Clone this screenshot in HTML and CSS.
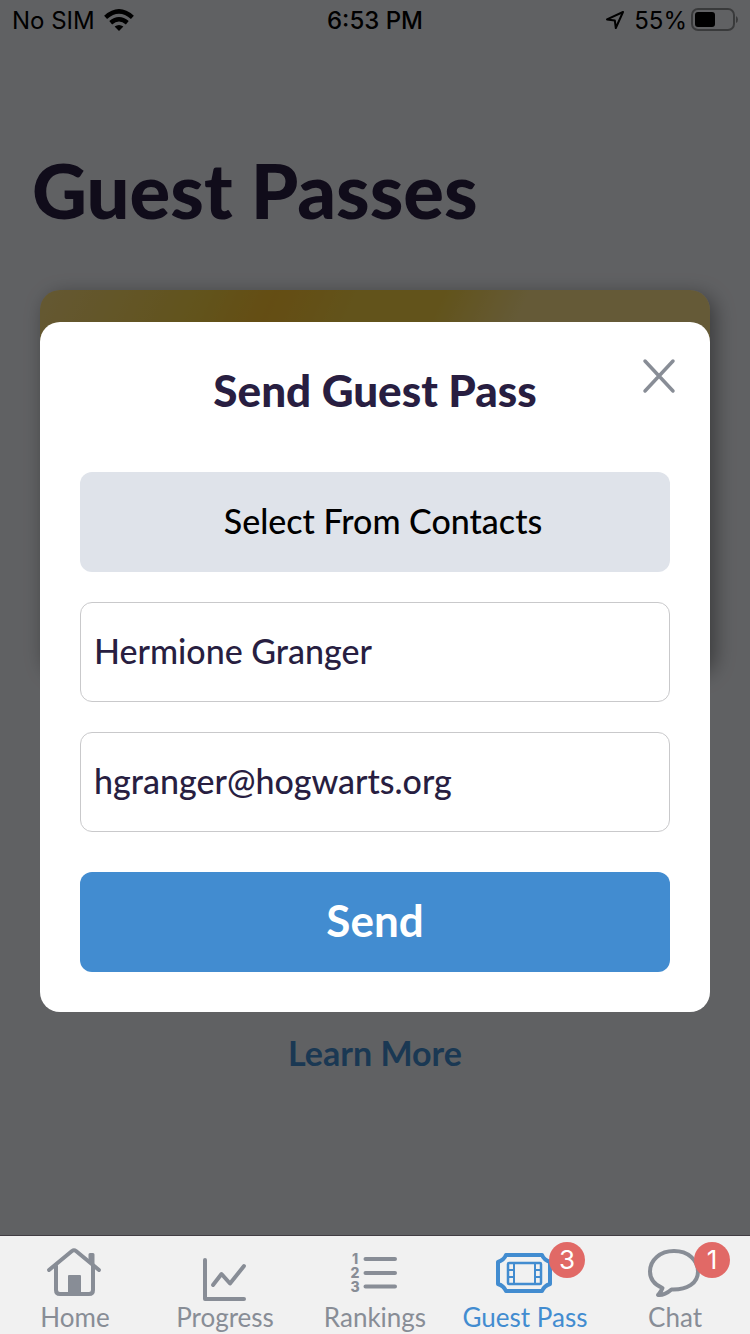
FILE: index.html
```html
<!DOCTYPE html>
<html lang="en">
<head>
<meta charset="utf-8">
<meta name="viewport" content="width=device-width, initial-scale=1">
<title>Guest Passes</title>
<link rel="stylesheet" href="styles.css">
</head>
<body>
<div class="app">
  <header class="status-bar">
    <div class="status-left">
      <span>No SIM</span>
      <svg class="wifi" viewBox="0 0 30 22" width="30" height="22" aria-hidden="true">
        <path d="M15 22 L10.6 17.6 Q15 14.2 19.4 17.6 Z" fill="currentColor"/>
        <path d="M6.7 13.8 Q15 6.8 23.3 13.8" fill="none" stroke="currentColor" stroke-width="4.4"/>
        <path d="M1.6 8.4 Q15 -3.6 28.4 8.4" fill="none" stroke="currentColor" stroke-width="4.4"/>
      </svg>
    </div>
    <time class="status-time">6:53 PM</time>
    <div class="status-right">
      <svg viewBox="0 0 20 20" width="20" height="20" aria-hidden="true">
        <path d="M18 2 L2 9.4 L9.8 10.4 L10.8 18 Z" fill="none" stroke="currentColor" stroke-width="2" stroke-linejoin="round"/>
      </svg>
      <span class="battery-level">55%</span>
      <svg viewBox="0 0 48 24" width="48" height="24" aria-hidden="true">
        <rect x="2" y="1" width="42" height="21" rx="6" fill="none" stroke="#000" stroke-opacity=".4" stroke-width="2"/>
        <rect x="5" y="4" width="20" height="15" rx="3" fill="#000"/>
        <path d="M46 8 Q48 9 48 11.500 Q48 14 46 15 Z" fill="#000" fill-opacity=".4"/>
      </svg>
    </div>
  </header>

  <main class="page">
    <h1 class="page-title">Guest Passes</h1>
    <section class="pass-card" aria-label="Guest pass"></section>
    <a class="learn-more" href="#">Learn More</a>
  </main>

  <nav class="tab-bar">
    <a class="tab" href="#">
      <svg class="tab-icon" viewBox="0 0 56 52" width="56" height="52" fill="none" stroke="currentColor" stroke-width="4" stroke-linecap="round" stroke-linejoin="round" aria-hidden="true">
        <path d="M2 24 L25 5 Q27 3.500 29 5 L52 24"/>
        <path d="M9 20 V44 Q9 48 13 48 H42 Q46 48 46 44 V20"/>
        <path d="M43 14 V8.500 H46 V19" fill="currentColor" stroke-width="3"/>
        <rect x="22" y="30" width="11" height="17" fill="currentColor" stroke-width="2"/>
      </svg>
      <span>Home</span>
    </a>
    <a class="tab" href="#">
      <svg class="tab-icon" viewBox="0 0 48 52" width="48" height="52" fill="none" stroke="currentColor" stroke-width="4" stroke-linecap="round" stroke-linejoin="round" aria-hidden="true">
        <path d="M4 14 V53 H43"/>
        <path d="M12 39 L20.500 28 L29 37.500 L43 20"/>
      </svg>
      <span>Progress</span>
    </a>
    <a class="tab" href="#">
      <svg class="tab-icon" viewBox="0 0 50 52" width="50" height="52" aria-hidden="true">
        <path d="M15.500 13 H45 M15.500 27 H45 M15.500 40.500 H45" stroke="currentColor" stroke-width="4" stroke-linecap="round"/>
        <g class="rank-digits" fill="currentColor"><text x="5" y="18" text-anchor="middle">1</text><text x="5" y="32" text-anchor="middle">2</text><text x="5" y="46" text-anchor="middle">3</text></g>
      </svg>
      <span>Rankings</span>
    </a>
    <a class="tab tab-active" href="#" aria-current="page">
      <span class="icon-wrap">
        <svg class="tab-icon" viewBox="0 0 56 52" width="56" height="52" fill="none" stroke="currentColor" aria-hidden="true">
          <path d="M9 9 H45 Q47 14 53 16 V38 Q47 40 45 45 H9 Q7 40 1 38 V16 Q7 14 9 9 Z" stroke-width="4" stroke-linejoin="round"/>
          <rect x="11" y="17" width="33" height="21" rx="1" stroke-width="2.500"/>
          <path d="M17 17 V38 M38 17 V38" stroke-width="2"/>
          <path d="M11 24 H17 M11 31 H17 M38 24 H44 M38 31 H44" stroke-width="2"/>
        </svg>
        <span class="badge">3</span>
      </span>
      <span>Guest Pass</span>
    </a>
    <a class="tab" href="#">
      <span class="icon-wrap">
        <svg class="tab-icon" viewBox="0 0 56 52" width="56" height="52" fill="none" stroke="currentColor" stroke-width="4" stroke-linejoin="round" aria-hidden="true">
          <path d="M27 5 C13 5 3 14 3 25.500 C3 33 7 38.500 15.500 42 C14.500 45 12.500 47 11 49 C16 49.500 21 46.500 24.500 43.500 C40 44 51 37.500 51 25.500 C51 14 41 5 27 5 Z"/>
        </svg>
        <span class="badge badge-inset">1</span>
      </span>
      <span>Chat</span>
    </a>
  </nav>
</div>

<div class="scrim">
  <form class="modal" role="dialog" aria-modal="true" aria-labelledby="modal-title">
    <button class="close" type="button" aria-label="Close">
      <svg viewBox="0 0 34 36" width="34" height="36" aria-hidden="true"><path d="M3 3 L31 33 M31 3 L3 33" stroke="currentColor" stroke-width="3.500" stroke-linecap="round"/></svg>
    </button>
    <h2 class="modal-title" id="modal-title">Send Guest Pass</h2>
    <div class="fields">
      <button class="contacts" type="button">Select From Contacts</button>
      <input class="field" type="text" aria-label="Name" value="Hermione Granger">
      <input class="field" type="email" aria-label="Email" value="hgranger@hogwarts.org">
    </div>
    <button class="send" type="submit">Send</button>
  </form>
</div>
</body>
</html>
```

FILE: styles.css
```css
* {
  box-sizing: border-box;
}

body {
  margin: 0;
  background: #f0f2f7;
  color: #281e41;
  font-family: Lato, "Open Sans", sans-serif;
}

button,
input {
  font: inherit;
  color: inherit;
}

.app {
  display: flex;
  flex-direction: column;
  min-height: 100vh;
}

.status-bar {
  display: grid;
  grid-template-columns: 1fr auto 1fr;
  align-items: center;
  height: 40px;
  padding: 0 12px;
  color: #000;
  font-family: Inter, sans-serif;
  font-size: 24px;
}

.status-left,
.status-right {
  display: flex;
  align-items: center;
  gap: 9px;
}

.status-right {
  justify-content: flex-end;
}

.battery-level {
  margin-right: -6px;
}

.status-time {
  font-weight: 500;
}

.page {
  flex: 1;
  display: flex;
  flex-direction: column;
  padding: 110px 40px 0 32px;
}

.page-title {
  margin: 0;
  font-size: 76px;
  font-weight: 900;
  line-height: 80px;
}

.pass-card {
  height: 380px;
  margin: 60px 0 0 8px;
  border-radius: 20px;
  background: linear-gradient(115deg, #fadc80 0%, #f5d045 20%, #f8c83a 24%, #fac132 28%, #f8c83a 33%, #f5d045 38%, #f5d045 48%, #fce18a 58%, #fce18a 100%);
  box-shadow: 5px 5px 20px rgba(0, 0, 0, 0.4);
}

.learn-more {
  align-self: center;
  margin: 363px 0 0 8px;
  color: #428cd0;
  font-size: 34px;
  font-weight: 700;
  line-height: 40px;
  text-decoration: none;
}

.tab-bar {
  position: sticky;
  bottom: 0;
  z-index: 2;
  display: grid;
  grid-template-columns: repeat(5, 1fr);
  border-top: 1px solid #413d43;
  background: #f1f1f1;
}

.tab {
  display: flex;
  flex-direction: column;
  align-items: center;
  gap: 2px;
  padding: 10px 0 0;
  color: #888d96;
  font-size: 26px;
  line-height: 34px;
  text-decoration: none;
  white-space: nowrap;
}

.tab-active {
  color: #428cd0;
}

.tab-icon {
  display: block;
  overflow: visible;
}

.rank-digits {
  font-family: Inter, sans-serif;
  font-size: 14px;
  font-weight: 800;
}

.icon-wrap {
  position: relative;
}

.badge {
  position: absolute;
  top: -4px;
  left: 52px;
  width: 36px;
  height: 36px;
  border-radius: 50%;
  background: #e16966;
  color: #fff;
  font-family: Inter, sans-serif;
  font-size: 26px;
  line-height: 36px;
  text-align: center;
}

.badge-inset {
  left: 47px;
}

.scrim {
  position: fixed;
  inset: 0;
  z-index: 1;
  display: flex;
  align-items: center;
  justify-content: center;
  padding: 40px;
  background: rgba(0, 0, 0, 0.6);
}

.modal {
  position: relative;
  flex: 1;
  display: flex;
  flex-direction: column;
  gap: 40px;
  padding: 40px;
  border-radius: 20px;
  background: #fff;
}

.close {
  position: absolute;
  top: 36px;
  right: 34px;
  padding: 0;
  border: 0;
  background: none;
  color: #888d96;
}

.close svg {
  display: block;
}

.modal-title {
  margin: 0;
  padding-bottom: 14px;
  font-size: 44px;
  font-weight: 900;
  line-height: 56px;
  text-align: center;
}

.fields {
  display: flex;
  flex-direction: column;
  gap: 30px;
}

.contacts,
.field,
.send {
  width: 100%;
  height: 100px;
  border: 0;
  border-radius: 12px;
  font-size: 34px;
}

.contacts,
.field {
  font-weight: 500;
}

.contacts {
  padding: 0 0 4px 16px;
  background: #dfe3ea;
  color: #000;
}

.field {
  padding: 0 13px 4px;
  border: 1px solid #c9c9cb;
  background: #fff;
}

.send {
  padding: 0 0 4px;
  background: #428cd0;
  color: #fff;
  font-size: 44px;
  font-weight: 700;
}
```
